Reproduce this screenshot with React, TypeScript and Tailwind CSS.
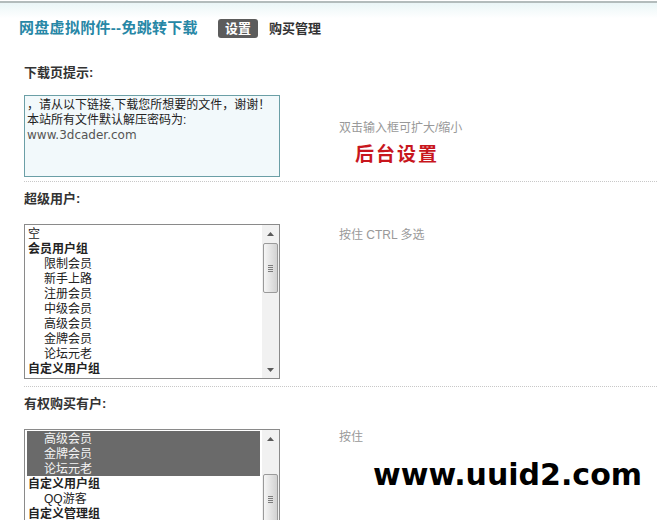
import clsx from 'clsx';

type Opt = { t: string; g?: boolean; sel?: boolean; top?: boolean };

const superUsers: Opt[] = [
  { t: '空', top: true },
  { t: '会员用户组', g: true },
  { t: '限制会员' },
  { t: '新手上路' },
  { t: '注册会员' },
  { t: '中级会员' },
  { t: '高级会员' },
  { t: '金牌会员' },
  { t: '论坛元老' },
  { t: '自定义用户组', g: true },
];

const buyers: Opt[] = [
  { t: '高级会员', sel: true },
  { t: '金牌会员', sel: true },
  { t: '论坛元老', sel: true },
  { t: '自定义用户组', g: true },
  { t: 'QQ游客' },
  { t: '自定义管理组', g: true },
  { t: '管理员' },
  { t: '超级版主' },
  { t: '版主' },
  { t: '实习版主' },
];

function Arrow({ up }: { up?: boolean }) {
  return (
    <div className="flex h-[17px] items-center justify-center">
      <svg width="7" height="4" viewBox="0 0 7 4">
        <path d={up ? 'M0 4 L3.5 0 L7 4Z' : 'M0 0 L3.5 4 L7 0Z'} fill="#5a5a5a" />
      </svg>
    </div>
  );
}

function Scrollbar({ thumbClass }: { thumbClass: string }) {
  return (
    <div className="flex w-[17px] flex-col bg-[#f1f1f1]">
      <Arrow up />
      <div className="flex-1 overflow-hidden">
        <div
          className={clsx(
            'mx-auto flex h-[50px] w-[15px] items-center justify-center rounded-[2px] border border-[#9a9a9a] bg-linear-to-r from-[#f6f6f6] to-[#d2d2d2]',
            thumbClass,
          )}
        >
          <div className="flex flex-col gap-px">
            {[0, 1, 2, 3].map((i) => (
              <div key={i} className="h-px w-[5px] bg-[#7c7c7c]" />
            ))}
          </div>
        </div>
      </div>
      <Arrow />
    </div>
  );
}

function ListBox({ opts, thumbClass }: { opts: Opt[]; thumbClass: string }) {
  return (
    <div className="flex h-[155px] w-[256px] shrink-0 border border-[#8a8a8a] bg-white">
      <div className="flex-1 overflow-hidden px-[2px] py-px">
        {opts.map((o) => (
          <div
            key={o.t}
            className={clsx(
              'h-[15px] whitespace-nowrap text-[12px] leading-[16px]',
              o.g && 'pl-px font-bold',
              o.top && 'pl-px',
              !o.g && !o.top && 'pl-[17px]',
              o.sel ? 'bg-[#6a6a6a] text-[#f4f4f4]' : 'text-[#222]',
            )}
          >
            {o.t}
          </div>
        ))}
      </div>
      <Scrollbar thumbClass={thumbClass} />
    </div>
  );
}

export default function App() {
  return (
    <div className="relative h-screen overflow-hidden bg-white font-['Liberation_Sans','Noto_Sans_CJK_SC',sans-serif] text-[#333]">
      {/* top bar */}
      <div className="mt-px border-t-2 border-[#b3bcbc] bg-linear-to-b from-[#eaf6f7] to-white to-30%">
        <div className="flex h-[51px] items-center pl-[19px]">
          <h1 className="text-[15px] font-bold tracking-[0.3px] text-[#2787a6]">网盘虚拟附件--免跳转下载</h1>
          <span className="ml-[20px] h-[19px] rounded-[3px] bg-[#5c5c5c] px-[7px] text-[13px] font-bold leading-[19px] text-white">
            设置
          </span>
          <span className="ml-[11px] text-[13px] font-bold text-[#333]">购买管理</span>
        </div>
      </div>

      <div className="ml-[24px]">
        {/* download tip */}
        <section className="border-b border-dotted border-[#c8c8c8] pt-[9px] pb-[4px]">
          <div className="h-[20px] text-[13px] font-bold leading-[20px]">下载页提示:</div>
          <div className="mt-[12px] flex">
            <div className="h-[82px] w-[256px] shrink-0 border border-[#6b9fa6] bg-[#f2f9fb] px-[2px] pt-[2px] text-[12px] leading-[15px] text-[#222]">
              <div>，请从以下链接,下载您所想要的文件，谢谢！</div>
              <div>本站所有文件默认解压密码为:</div>
              <div className="font-['DejaVu_Sans',sans-serif] text-[#555]">www.3dcader.com</div>
            </div>
            <div className="ml-[59px] pt-[25px]">
              <div className="text-[12px] leading-[16px] text-[#999]">双击输入框可扩大/缩小</div>
              <div className="mt-[7px] ml-[16px] text-[19px] font-bold leading-[24px] tracking-[2px] text-[#c8161d]">
                后台设置
              </div>
            </div>
          </div>
        </section>

        {/* super users */}
        <section className="border-b border-dotted border-[#c8c8c8] pt-[7px] pb-[7px]">
          <div className="h-[20px] text-[13px] font-bold leading-[20px]">超级用户:</div>
          <div className="mt-[15px] flex">
            <ListBox opts={superUsers} thumbClass="mt-px" />
            <div className="ml-[59px] pt-[3px] text-[12px] leading-[16px] text-[#999]">按住 CTRL 多选</div>
          </div>
        </section>

        {/* buyers */}
        <section className="pt-[7px]">
          <div className="h-[20px] text-[13px] font-bold leading-[20px]">有权购买有户:</div>
          <div className="mt-[15px] flex">
            <ListBox opts={buyers} thumbClass="mt-[27px]" />
            <div className="ml-[59px] text-[12px] leading-[16px] text-[#999]">按住 CTRL 多选</div>
          </div>
        </section>
      </div>

      {/* watermark */}
      <div className="absolute top-[426px] left-[364px] h-[86px] w-[292px] bg-white pt-[34px] pl-[9px]">
        <div className="font-['DejaVu_Sans',sans-serif] text-[30px] font-bold leading-[30px] text-black">
          www.uuid2.com
        </div>
      </div>
    </div>
  );
}
